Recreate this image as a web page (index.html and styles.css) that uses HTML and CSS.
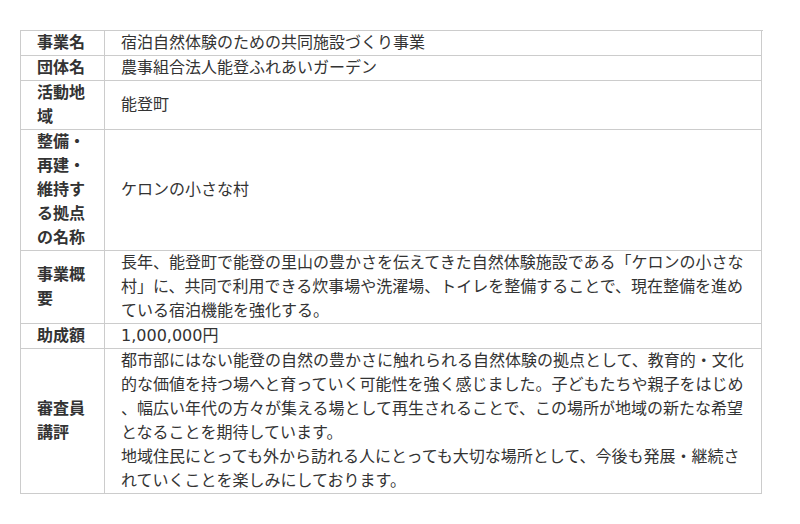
FILE: index.html
```html
<!DOCTYPE html>
<html lang="ja">
<head>
<meta charset="utf-8">
<title>事業概要</title>
<link rel="stylesheet" href="styles.css">
</head>
<body>
<div class="page">
  <div class="info">
    <div class="th">事業名</div>
    <div class="td"><div class="tx">宿泊自然体験のための共同施設づくり事業</div></div>
    <div class="th">団体名</div>
    <div class="td"><div class="tx">農事組合法人能登ふれあいガーデン</div></div>
    <div class="th">活動地域</div>
    <div class="td"><div class="tx">能登町</div></div>
    <div class="th">整備・再建・維持する拠点の名称</div>
    <div class="td"><div class="tx">ケロンの小さな村</div></div>
    <div class="th">事業概要</div>
    <div class="td"><div class="tx">長年、能登町で能登の里山の豊かさを伝えてきた自然体験施設である「ケロンの小さな村」に、共同で利用できる炊事場や洗濯場、トイレを整備することで、現在整備を進めている宿泊機能を強化する。</div></div>
    <div class="th">助成額</div>
    <div class="td"><div class="tx">1,000,000円</div></div>
    <div class="th">審査員講評</div>
    <div class="td"><div class="tx">都市部にはない能登の自然の豊かさに触れられる自然体験の拠点として、教育的・文化的な価値を持つ場へと育っていく可能性を強く感じました。子どもたちや親子をはじめ、幅広い年代の方々が集える場として再生されることで、この場所が地域の新たな希望となることを期待しています。<br>地域住民にとっても外から訪れる人にとっても大切な場所として、今後も発展・継続されていくことを楽しみにしております。</div></div>
  </div>
</div>
</body>
</html>
```

FILE: styles.css
```css
html, body {
  margin: 0;
  padding: 0;
  background: #ffffff;
}

.page {
  padding: 30px 20px;
}

.info {
  display: grid;
  grid-template-columns: 84px 657px;
  width: 742px;
  border-top: 1px solid #cccccc;
  border-left: 1px solid #cccccc;
  font-family: "DejaVu Sans", "Noto Sans CJK JP", sans-serif;
  font-size: 16px;
  line-height: 24px;
  color: #333333;
}

.th,
.td {
  display: flex;
  align-items: center;
  padding: 0 16px;
  border-right: 1px solid #cccccc;
  border-bottom: 1px solid #cccccc;
  line-break: anywhere;
  word-break: break-all;
}

.th {
  font-weight: bold;
}

.tx {
  width: 100%;
}
```
